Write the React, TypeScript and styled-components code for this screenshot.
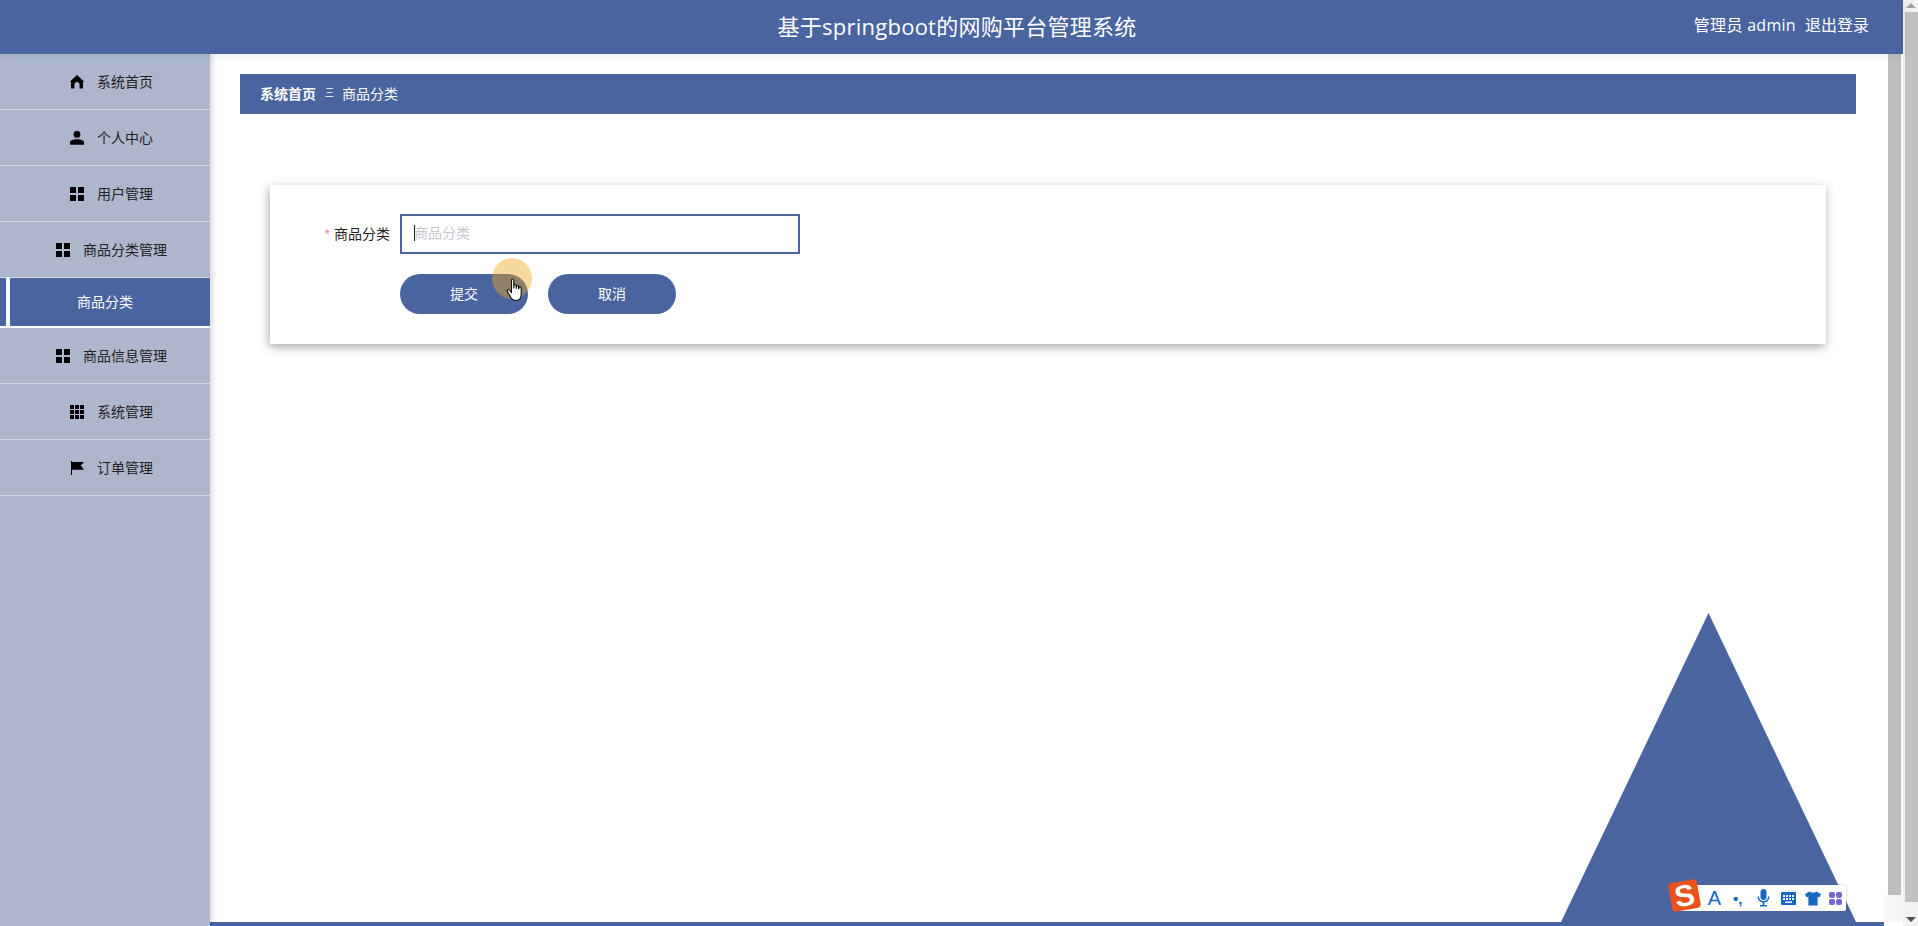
import React from 'react';
import styled, { createGlobalStyle } from 'styled-components';

const BLUE = '#4a64a0';

const GlobalStyle = createGlobalStyle`
  html, body {
    margin: 0;
    padding: 0;
    height: 100%;
    overflow: hidden;
    background: #fff;
    font-family: "Liberation Sans", "Noto Sans CJK SC", sans-serif;
  }
  * { box-sizing: border-box; }
`;

const Shell = styled.div`
  position: relative;
  display: flex;
  height: 100vh;
  width: 100%;
  overflow: hidden;
`;

const Page = styled.div`
  flex: 1;
  min-width: 0;
  display: flex;
  flex-direction: column;
`;

const Header = styled.header`
  position: relative;
  z-index: 2;
  flex: 0 0 54px;
  display: grid;
  grid-template-columns: 1fr auto 1fr;
  align-items: center;
  background: ${BLUE};
  color: #fff;
  box-shadow: 0 2px 8px rgba(74, 100, 160, 0.12);
`;

const Title = styled.h1`
  grid-column: 2;
  margin: 0;
  padding: 0 0 5px 11px;
  font-size: 22px;
  font-weight: 400;
  letter-spacing: 0.25px;
  font-family: "Open Sans", "Noto Sans CJK SC", sans-serif;
  white-space: nowrap;
`;

const UserBox = styled.div`
  grid-column: 3;
  justify-self: end;
  display: flex;
  gap: 9px;
  padding: 0 34px 6px 0;
  font-size: 16px;
  font-family: "Open Sans", "Noto Sans CJK SC", sans-serif;
`;

const AdminName = styled.span`
  letter-spacing: 0.3px;
`;

const Body = styled.div`
  flex: 1;
  min-height: 0;
  display: flex;
`;

const Sidebar = styled.nav`
  position: relative;
  z-index: 1;
  flex: 0 0 210px;
  background: #adb6ca;
  box-shadow: 2px 0 6px rgba(0, 0, 0, 0.18);
`;

const MenuItem = styled.div`
  height: 56px;
  display: flex;
  align-items: center;
  justify-content: center;
  gap: 13px;
  padding-left: 13px;
  border-bottom: 1px solid #d3d8e3;
  font-size: 14px;
  color: #222;
`;

const MenuLabel = styled.span`
  margin-bottom: 2px;
`;

const SubItem = styled.div`
  height: 50px;
  display: flex;
  align-items: center;
  justify-content: center;
  padding-bottom: 2px;
  background: linear-gradient(to right, ${BLUE} 6px, #fff 6px, #fff 10px, ${BLUE} 10px);
  border-bottom: 2px solid #fff;
  font-size: 14px;
  color: #fff;
`;

const IconSvg = styled.svg`
  flex: 0 0 14px;
  width: 14px;
  height: 14px;
  fill: #000;
`;

const Main = styled.main`
  flex: 1;
  min-width: 0;
  display: flex;
  flex-direction: column;
`;

const MainRow = styled.div`
  flex: 1;
  min-height: 0;
  display: flex;
`;

const Content = styled.div`
  position: relative;
  flex: 1;
  min-width: 0;
  padding: 20px 28px 0 30px;
  background: #fff;
`;

const BottomBar = styled.div`
  flex: 0 0 4px;
  margin-right: 19px;
  background: ${BLUE};
`;

const Breadcrumb = styled.div`
  height: 40px;
  display: flex;
  align-items: center;
  padding: 0 0 2px 20px;
  background: ${BLUE};
  color: #fff;
  font-size: 14px;
`;

const CrumbHome = styled.span`
  font-weight: 700;
`;

const CrumbSep = styled.span`
  width: 8px;
  margin: 3px 9px 0;
  font-size: 9px;
  transform: scale(1, 1.2);
  line-height: 1;
`;

const Card = styled.section`
  position: relative;
  z-index: 1;
  height: 159px;
  margin: 71px 30px 0 30px;
  padding: 29px 0 0 130px;
  background: #fff;
  box-shadow: -1px 3px 9px rgba(0, 0, 0, 0.34);
`;

const FormRow = styled.div`
  display: flex;
  align-items: center;
  height: 40px;
`;

const Label = styled.label`
  width: 130px;
  margin-left: -130px;
  padding: 0 10px 2px 0;
  text-align: right;
  font-size: 14px;
  color: #222;
`;

const Required = styled.span`
  margin-right: 4px;
  color: #e58aa0;
`;

const InputWrap = styled.div`
  position: relative;
  width: 400px;
  height: 40px;
`;

const TextInput = styled.input`
  width: 100%;
  height: 100%;
  padding: 0 12px 2px;
  border: 2px solid ${BLUE};
  outline: none;
  background: #fff;
  font-size: 14px;
  font-family: inherit;

  &::placeholder {
    color: #c4c7ce;
    opacity: 1;
  }
`;

const Caret = styled.i`
  position: absolute;
  left: 14px;
  top: 11px;
  width: 1px;
  height: 16px;
  background: #222;
`;

const Actions = styled.div`
  display: flex;
  gap: 20px;
  margin-top: 20px;
`;

const PillButton = styled.button`
  width: 128px;
  height: 40px;
  padding: 0 0 2px;
  border: 0;
  border-radius: 20px;
  background: ${BLUE};
  color: #fff;
  font-size: 14px;
  font-family: inherit;
`;

const Triangle = styled.div`
  position: absolute;
  right: 28px;
  bottom: 0;
  width: 295px;
  height: 309px;
  background: ${BLUE};
  clip-path: polygon(50% 0, 100% 100%, 0 100%);
`;

const InnerScroll = styled.div`
  flex: 0 0 19px;
  padding: 0 2px 0 4px;
  background: linear-gradient(to bottom, #fff 841px, #f6f6f6 841px);
`;

const InnerThumb = styled.div`
  height: 841px;
  background: #bdbdbd;
`;

const OuterScroll = styled.aside`
  position: relative;
  flex: 0 0 15px;
  padding: 12px 0 0 2px;
  background: #f1f1f1;
`;

const OuterThumb = styled.div`
  height: 890px;
  background: #c1c1c1;
`;

const Arrow = styled.i<{ $down?: boolean }>`
  position: absolute;
  left: 3px;
  ${p => (p.$down ? 'bottom: 4px;' : 'top: 3px;')}
  width: 0;
  height: 0;
  border-left: 5px solid transparent;
  border-right: 5px solid transparent;
  ${p => (p.$down ? 'border-top: 5px solid #505050;' : 'border-bottom: 5px solid #a3a3a3;')}
`;

const CursorHalo = styled.div`
  position: absolute;
  left: 492px;
  top: 258px;
  z-index: 5;
  width: 40px;
  height: 41px;
  border-radius: 50%;
  background: rgba(236, 165, 31, 0.43);
`;

const HandCursor = styled.svg`
  position: absolute;
  left: 506px;
  top: 278px;
  z-index: 6;
  width: 19px;
  height: 25px;
`;

const ImeBar = styled.div`
  position: absolute;
  left: 1678px;
  top: 885px;
  z-index: 7;
  width: 168px;
  height: 26px;
  display: flex;
  align-items: center;
  padding-left: 29px;
  background: #fff;
  border-radius: 2px;
  box-shadow: 0 0 2px rgba(80, 100, 150, 0.5);
  color: #1668c4;
`;

const ImeLogo = styled.div`
  position: absolute;
  left: -8px;
  top: -4px;
  width: 29px;
  height: 29px;
  display: flex;
  align-items: center;
  justify-content: center;
  border-radius: 4px;
  background: #e8521f;
  transform: rotate(-10deg);
  color: #fff;
  font-size: 30px;
  font-weight: 700;
  line-height: 1;
`;

const ImeLetter = styled.span`
  flex: 0 0 15px;
  margin-right: 11px;
  font-size: 20px;
  line-height: 1;
  text-align: center;
`;

const ImePunct = styled.span`
  flex: 0 0 14px;
  margin-right: 10px;
  font-size: 15px;
  font-weight: 700;
  line-height: 1;
  white-space: nowrap;
`;

const ImeSlot = styled.span`
  flex: 0 0 24px;
  display: flex;
  align-items: center;
`;

const ImeSvg = styled.svg`
  flex: none;
  fill: currentColor;
`;

const ImeGrid = styled.div`
  display: grid;
  grid-template-columns: 6px 6px;
  gap: 1px;
`;

const ImeDot = styled.i`
  width: 6px;
  height: 6px;
  border-radius: 2px;
  background: #7468cf;
`;

type IconName = 'home' | 'user' | 'grid' | 'apps' | 'flag';

const iconShapes: Record<IconName, React.ReactNode> = {
  home: <path d="M7 0 L13.7 6.2 C14 6.6 14 7 13.5 7 H13 V13.4 H9.6 V9.6 C9.6 8.2 8.4 7 7 7 C5.6 7 4.4 8.2 4.4 9.6 V13.4 H1 V7 H0.5 C0 7 0 6.6 0.3 6.2 Z" />,
  user: (
    <>
      <circle cx="7" cy="3.4" r="3.4" />
      <path d="M0 13.8 V11.6 C0 9.2 3.4 8.2 7 8.2 C10.6 8.2 14 9.2 14 11.6 V13.8 Z" />
    </>
  ),
  grid: (
    <>
      <rect x="0" y="0" width="6" height="6" />
      <rect x="8" y="0" width="6" height="6" />
      <rect x="0" y="8" width="6" height="6" />
      <rect x="8" y="8" width="6" height="6" />
    </>
  ),
  apps: (
    <>
      {[0, 5, 10].map(y =>
        [0, 5, 10].map(x => <rect key={`${x}-${y}`} x={x} y={y} width="4" height="4" />),
      )}
    </>
  ),
  flag: <path d="M1 0 H2 V1 H14 L10.8 4.6 L14 8.8 H2 V14.4 H1 Z" />,
};

const MenuIcon = ({ name }: { name: IconName }) => (
  <IconSvg viewBox="0 0 14 14">{iconShapes[name]}</IconSvg>
);

const menuTop: { icon: IconName; label: string }[] = [
  { icon: 'home', label: '系统首页' },
  { icon: 'user', label: '个人中心' },
  { icon: 'grid', label: '用户管理' },
  { icon: 'grid', label: '商品分类管理' },
];

const menuBottom: { icon: IconName; label: string }[] = [
  { icon: 'grid', label: '商品信息管理' },
  { icon: 'apps', label: '系统管理' },
  { icon: 'flag', label: '订单管理' },
];

const App: React.FC = () => {
  return (
    <Shell>
      <GlobalStyle />
      <Page>
        <Header>
          <Title>基于springboot的网购平台管理系统</Title>
          <UserBox>
            <AdminName>管理员 admin</AdminName>
            <span>退出登录</span>
          </UserBox>
        </Header>
        <Body>
          <Sidebar>
            {menuTop.map(item => (
              <MenuItem key={item.label}>
                <MenuIcon name={item.icon} />
                <MenuLabel>{item.label}</MenuLabel>
              </MenuItem>
            ))}
            <SubItem>商品分类</SubItem>
            {menuBottom.map(item => (
              <MenuItem key={item.label}>
                <MenuIcon name={item.icon} />
                <MenuLabel>{item.label}</MenuLabel>
              </MenuItem>
            ))}
          </Sidebar>
          <Main>
            <MainRow>
              <Content>
                <Breadcrumb>
                  <CrumbHome>系统首页</CrumbHome>
                  <CrumbSep>三</CrumbSep>
                  <span>商品分类</span>
                </Breadcrumb>
                <Card>
                  <FormRow>
                    <Label>
                      <Required>*</Required>商品分类
                    </Label>
                    <InputWrap>
                      <TextInput placeholder="商品分类" readOnly />
                      <Caret />
                    </InputWrap>
                  </FormRow>
                  <Actions>
                    <PillButton>提交</PillButton>
                    <PillButton>取消</PillButton>
                  </Actions>
                </Card>
                <Triangle />
              </Content>
              <InnerScroll>
                <InnerThumb />
              </InnerScroll>
            </MainRow>
            <BottomBar />
          </Main>
        </Body>
      </Page>
      <OuterScroll>
        <Arrow />
        <OuterThumb />
        <Arrow $down />
      </OuterScroll>

      <CursorHalo />
      <HandCursor viewBox="0 0 19 25">
        <path
          d="M5.5 2 C5.5 0.6 7.8 0.6 7.8 2 V10 L8 7.6 C8 6.3 10.2 6.3 10.2 7.6 V10.4 L10.5 8.4 C10.5 7.2 12.6 7.2 12.6 8.4 V11 L13 9.6 C13.1 8.5 15.2 8.6 15.2 9.8 V16 C15.2 20 13.5 22.5 10 22.5 C6.8 22.5 5.5 21 4.2 18.4 L1.3 13.4 C0.6 12 2.3 10.9 3.3 12 L5.5 14.6 Z"
          fill="#fff"
          stroke="#111"
          strokeWidth="1.1"
          strokeLinejoin="round"
        />
      </HandCursor>

      <ImeBar>
        <ImeLogo>S</ImeLogo>
        <ImeLetter>A</ImeLetter>
        <ImePunct>•,</ImePunct>
        <ImeSlot>
          <ImeSvg width="13" height="18" viewBox="0 0 13 18">
            <rect x="3.5" y="0" width="6" height="11" rx="3" />
            <path d="M0.5 7.5 H2 C2 10.5 4 12 6.5 12 C9 12 11 10.5 11 7.5 H12.5 C12.5 11 10.2 13.2 7.3 13.5 V16 H10 V17.5 H3 V16 H5.7 V13.5 C2.8 13.2 0.5 11 0.5 7.5 Z" />
          </ImeSvg>
        </ImeSlot>
        <ImeSlot>
          <ImeSvg width="15" height="13" viewBox="0 0 15 13">
            <path
              fillRule="evenodd"
              d="M1 0 H14 C14.6 0 15 0.4 15 1 V12 C15 12.6 14.6 13 14 13 H1 C0.4 13 0 12.6 0 12 V1 C0 0.4 0.4 0 1 0 Z M2 3 V5 H4 V3 Z M5 3 V5 H7 V3 Z M8 3 V5 H10 V3 Z M11 3 V5 H13 V3 Z M2 6 V8 H4 V6 Z M5 6 V8 H7 V6 Z M8 6 V8 H10 V6 Z M11 6 V8 H13 V6 Z M4 9.5 V11 H11 V9.5 Z"
            />
          </ImeSvg>
        </ImeSlot>
        <ImeSlot>
          <ImeSvg width="16" height="15" viewBox="0 0 16 15">
            <path d="M4.6 0.5 L6 1.6 H10 L11.4 0.5 L16 3.2 L14.4 6.6 L12.6 5.8 V14.5 H3.4 V5.8 L1.6 6.6 L0 3.2 Z" />
          </ImeSvg>
        </ImeSlot>
        <ImeGrid>
          <ImeDot />
          <ImeDot />
          <ImeDot />
          <ImeDot />
        </ImeGrid>
      </ImeBar>
    </Shell>
  );
};

export default App;
